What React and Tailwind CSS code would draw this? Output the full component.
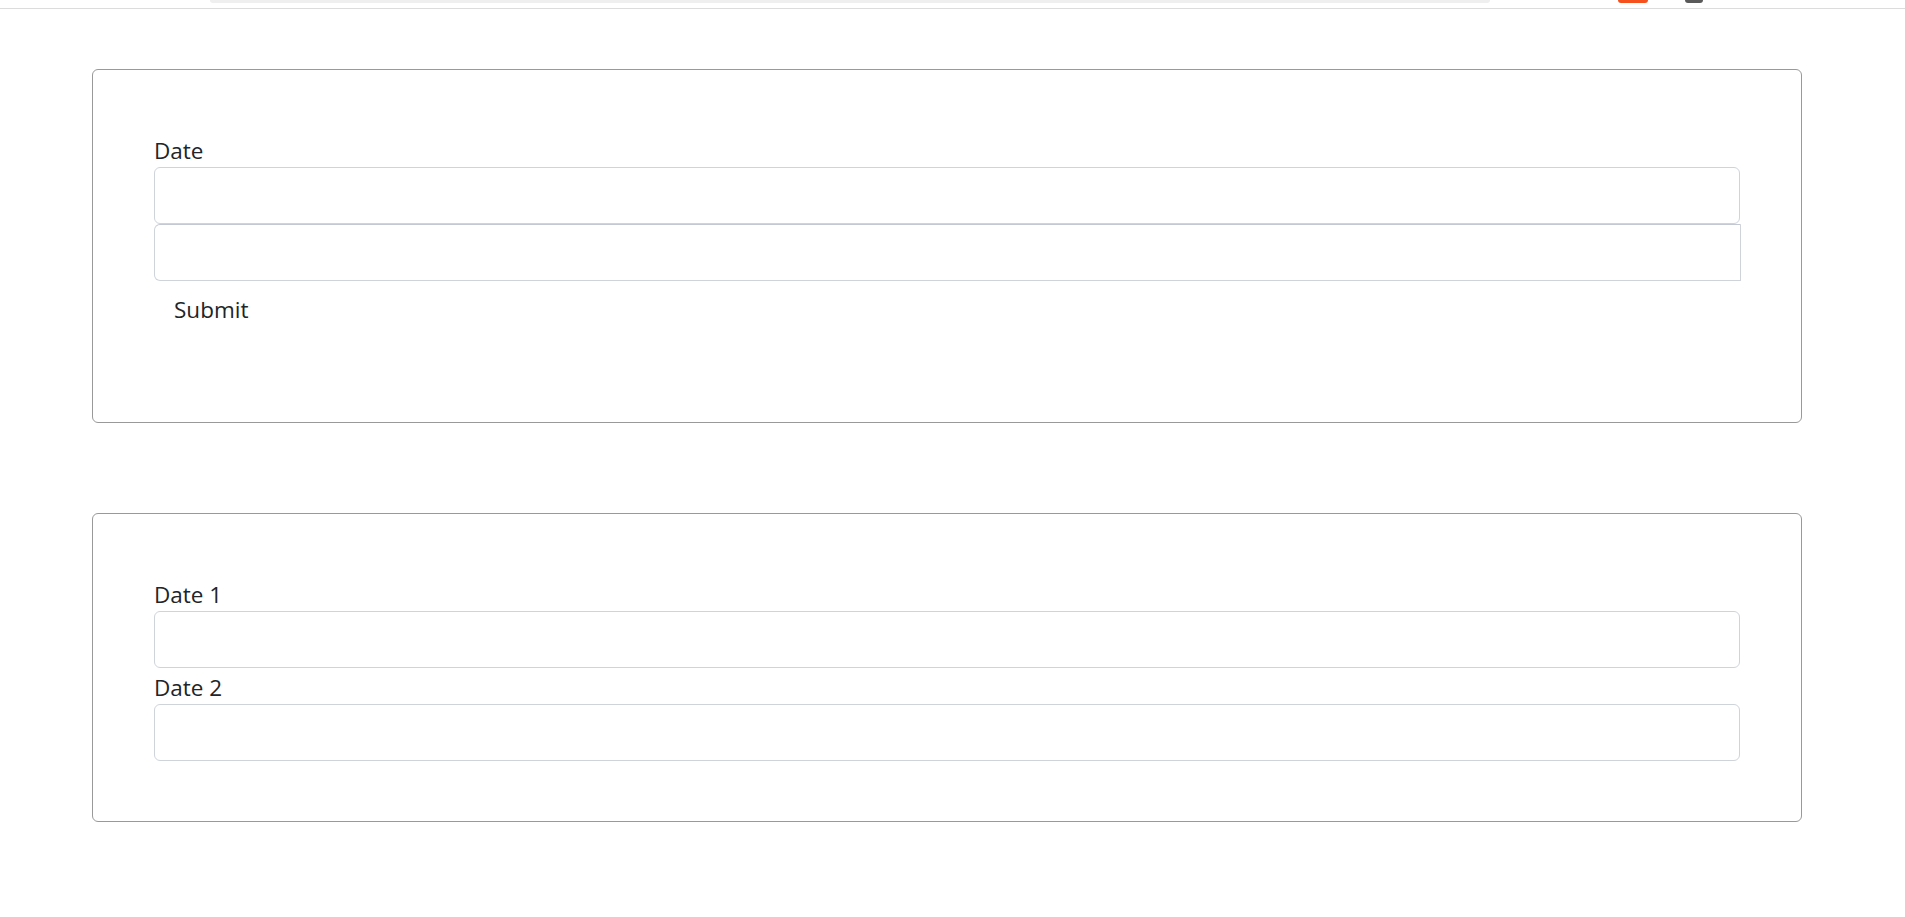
export default function App() {
  return (
    <div className="min-h-screen bg-white text-[#212529] font-['Open_Sans',sans-serif]">
      <div className="h-[9px] border-b border-[#dcdcdc] flex items-start">
        <div className="ml-[210px] w-[1280px] h-[3px] bg-[#efefef] rounded-b-[6px]" />
        <div className="ml-[128px] w-[30px] h-[3px] bg-[#f4511e] rounded-b-[3px]" />
        <div className="ml-[37px] w-[18px] h-[3px] bg-[#5a5a5a] rounded-b-[3px]" />
      </div>

      <div className="pl-[92px] pr-[103px] pt-[60px] flex flex-col gap-[90px]">
        <div className="border border-[#999999] rounded-[6px] pt-[61px] pb-[84px] px-[61px]">
          <form className="flex flex-col items-start">
            <label className="block h-[36px] text-[22.5px] leading-[39px]">Date</label>
            <input className="block w-full h-[57px] border border-[#ced4da] rounded-[6px] bg-white" />
            <input className="block w-[calc(100%+1px)] h-[57px] border border-[#ced4da] border-t-[#c4c8d4] rounded-l-[6px] bg-white" />
            <button type="button" className="h-[57px] px-[20px] pt-[11px] pb-[10px] text-[22.5px] leading-[36px] text-[#212529]">Submit</button>
          </form>
        </div>

        <div className="border border-[#999999] rounded-[6px] pt-[61px] pb-[60px] px-[61px]">
          <div className="flex flex-col">
            <label className="block h-[36px] text-[22.5px] leading-[39px]">Date 1</label>
            <input className="block w-full h-[57px] border border-[#ced4da] rounded-[6px] bg-white" />
            <label className="block h-[36px] text-[22.5px] leading-[39px]">Date 2</label>
            <input className="block w-full h-[57px] border border-[#ced4da] rounded-[6px] bg-white" />
          </div>
        </div>
      </div>
    </div>
  );
}
